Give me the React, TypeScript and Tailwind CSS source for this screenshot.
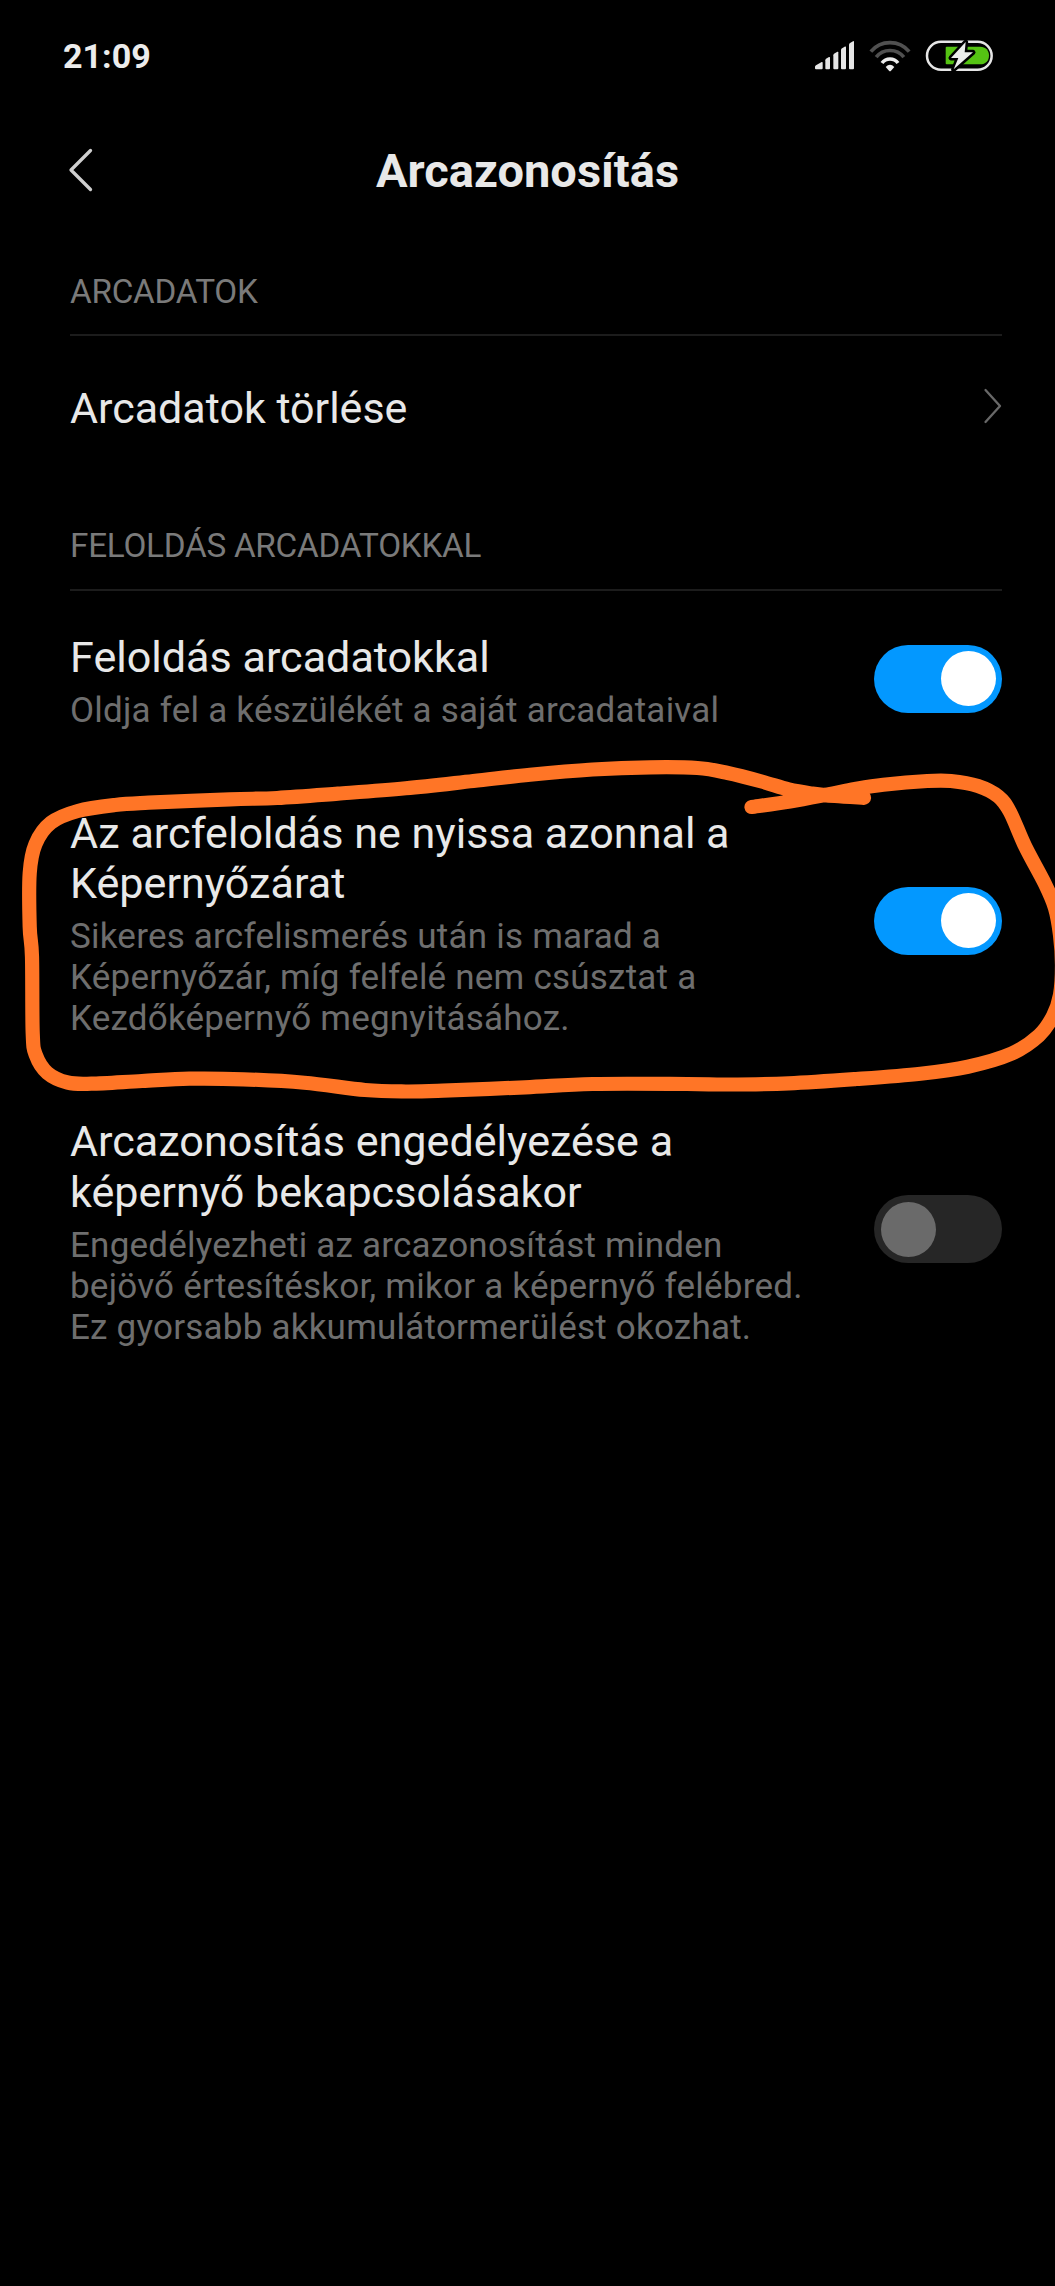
type Point = [number, number];

const STROKE_POINTS: Point[] = [
  [751.5, 807], [790, 801.5], [827.6, 794.5], [855, 789], [883.3, 784.7], [927.3, 781], [951, 781],
  [978, 786], [998.3, 796.5], [1010, 812], [1025.3, 846.7], [1045, 884], [1055, 908], [1060, 935],
  [1062, 965], [1060, 995], [1053, 1016], [1039, 1035.5], [1011.8, 1053.5], [967.9, 1066.7],
  [920.5, 1073.7], [856.3, 1079], [788.7, 1083.3], [727.8, 1084.5], [687, 1084], [592.6, 1084],
  [525, 1087.3], [442.9, 1090.7], [405.7, 1091.5], [365, 1090], [304.3, 1082.7], [243.4, 1079.3],
  [189.3, 1078.7], [142, 1081], [91.3, 1083.7], [67.6, 1082.5], [47.3, 1072.8], [35.8, 1055],
  [32.7, 1033], [32, 956.7], [29.7, 926.7], [29.7, 873.3], [35.5, 844], [51, 822.7], [77.8, 811],
  [115, 805], [148.7, 802.7], [229.9, 799.3], [277.2, 798], [338, 793.7], [405.7, 788.3],
  [473.3, 781], [530, 774.7], [592.6, 769.5], [650, 767.3], [697.4, 768], [727.8, 773],
  [761.6, 781.5], [788.7, 789.5], [812.4, 793.6], [835, 796], [864, 797.8],
];

/** Catmull-Rom spline through the points, written as cubic segments. */
function smoothPath(points: Point[]): string {
  let d = `M${points[0][0]} ${points[0][1]}`;
  for (let i = 0; i < points.length - 1; i++) {
    const p0 = points[Math.max(0, i - 1)];
    const p1 = points[i];
    const p2 = points[i + 1];
    const p3 = points[Math.min(points.length - 1, i + 2)];
    d += ` C${p1[0] + (p2[0] - p0[0]) / 6} ${p1[1] + (p2[1] - p0[1]) / 6} ${p2[0] - (p3[0] - p1[0]) / 6} ${p2[1] - (p3[1] - p1[1]) / 6} ${p2[0]} ${p2[1]}`;
  }
  return d;
}

function HandDrawnCircle() {
  return (
    <svg className="pointer-events-none absolute inset-0 h-full w-full" viewBox="0 0 1055 2286" fill="none">
      <path d={smoothPath(STROKE_POINTS)} stroke="#ff7526" strokeWidth="14.2" strokeLinecap="round" strokeLinejoin="round" />
    </svg>
  );
}

function SignalIcon() {
  return (
    <svg className="h-[34px] w-10" viewBox="75 57 120 102" fill="#e6e6e6">
      <path d="M75 140q0-3 3-4.500L95 126q3-1 3 2v17q0 3-3 3H78q-3 0-3-3z" />
      <path d="M106 121q0-3 2-4.500l9-5.500q3-1 3 2v32q0 3-3 3h-8q-3 0-3-3z" />
      <path d="M130 106q0-3 2-4.500l10-6q3-1 3 2v47.500q0 3-3 3h-9q-3 0-3-3z" />
      <path d="M153 90q0-3 2-4.500l10-6q3-1 3 2V145q0 3-3 3h-9q-3 0-3-3z" />
      <path d="M177 74q0-3 2-4.500l10-6q3-1 3 2V145q0 3-3 3h-9q-3 0-3-3z" />
    </svg>
  );
}

function WifiIcon() {
  return (
    <svg className="h-[34px] w-11" viewBox="234 57 132 102" fill="none" strokeWidth="11">
      <path d="M242.500 95A74.700 74.700 0 0 1 357.500 95" stroke="#505050" />
      <path d="M258.500 111.500A53 53 0 0 1 341.500 111.500" stroke="#505050" />
      <path d="M276 129A30 30 0 0 1 324 129" stroke="#ececec" />
      <path d="M287 141Q300 127 313 141L303 152Q300 155 297 152Z" fill="#ececec" />
    </svg>
  );
}

function BatteryIcon() {
  return (
    <svg className="h-[34px] w-[69px]" viewBox="405 57 207 102" fill="none">
      <rect x="411" y="65.500" width="194" height="84" rx="42" stroke="#e6e6e6" strokeWidth="7.500" />
      <path d="M470 80H570C588 80 597 92 597 106.500S588 133 570 133H470Q467 133 467 130V83Q467 80 470 80Z" fill="#55c313" />
      <path
        d="M527 67L483 114H505L491 148L549 97H524Z"
        fill="#000"
        stroke="#000"
        strokeWidth="15"
        strokeLinejoin="round"
      />
      <path d="M527 66L483 114H505L491 148L549 97H524Z" fill="#ececec" />
    </svg>
  );
}

function Lines({ lines }: { lines: string[] }) {
  return (
    <>
      {lines.map((line) => (
        <span key={line} className="block whitespace-nowrap">
          {line}
        </span>
      ))}
    </>
  );
}

function Toggle({ on }: { on: boolean }) {
  return (
    <button
      type="button"
      role="switch"
      aria-checked={on}
      className={`mb-[5px] flex h-[68px] w-32 shrink-0 items-center rounded-full ${
        on ? "justify-end bg-[#0398ff] pr-[6px]" : "justify-start bg-[#262626] pl-[7px]"
      }`}
    >
      <span className={`size-[55px] rounded-full ${on ? "bg-white" : "bg-[#6a6a6a]"}`} />
    </button>
  );
}

function SettingRow({ title, summary, on }: { title: string[]; summary: string[]; on: boolean }) {
  return (
    <div className="flex items-center justify-between">
      <div>
        <h3 className="pt-px text-[43.1px] leading-[50.7px] text-[#e8e8e8]">
          <Lines lines={title} />
        </h3>
        <p className="mt-[6px] text-[35px] leading-[41px] tracking-[0.22px] text-[#6e6e6e]">
          <Lines lines={summary} />
        </p>
      </div>
      <Toggle on={on} />
    </div>
  );
}

function SectionHeader({ children }: { children: string }) {
  return <h2 className="border-b-2 border-[#1c1c1c] text-[33.3px] leading-10 tracking-[-0.27px] text-[#7a7a7a]">{children}</h2>;
}

export default function App() {
  return (
    <div className="relative min-h-[2286px] w-[1055px] overflow-hidden bg-black font-[Roboto,sans-serif]">
      <div className="flex h-28 items-center justify-between pr-[61px] pl-[63px]">
        <span className="text-[34.1px] leading-10 font-bold text-[#ececec]">21:09</span>
        <div className="flex items-center gap-[13px]">
          <SignalIcon />
          <WifiIcon />
          <BatteryIcon />
        </div>
      </div>

      <header className="grid h-[118px] grid-cols-[1fr_auto_1fr] items-center px-[66px]">
        <button type="button" aria-label="Vissza" className="mb-[3px] justify-self-start">
          <svg className="block h-12 w-[30px]" viewBox="0 0 30 48" fill="none">
            <path d="M24.500 4.500L5 24L24.500 43.500" stroke="#cfcfcf" strokeWidth="3.300" strokeLinecap="round" strokeLinejoin="round" />
          </svg>
        </button>
        <h1 className="text-[47px] leading-[56px] font-bold text-[#e8e8e8]">Arcazonosítás</h1>
      </header>

      <main className="pr-[53px] pl-[70px]">
        <section className="pt-[42px] [&>h2]:pb-[22px]">
          <SectionHeader>ARCADATOK</SectionHeader>
          <div className="flex items-center justify-between pt-[47px]">
            <h3 className="text-[43px] leading-[51px] text-[#e8e8e8]">Arcadatok törlése</h3>
            <svg className="mb-[5px] h-10 w-5" viewBox="0 0 20 40" fill="none">
              <path d="M3.500 4L18 20L3.500 36" stroke="#686868" strokeWidth="2.300" strokeLinecap="round" strokeLinejoin="round" />
            </svg>
          </div>
        </section>

        <section className="pt-[92px] [&>h2]:pb-[23px]">
          <SectionHeader>FELOLDÁS ARCADATOKKAL</SectionHeader>
          <div className="flex flex-col gap-[77px] pt-[41px]">
            <SettingRow
              title={["Feloldás arcadatokkal"]}
              summary={["Oldja fel a készülékét a saját arcadataival"]}
              on
            />
            <SettingRow
              title={["Az arcfeloldás ne nyissa azonnal a", "Képernyőzárat"]}
              summary={[
                "Sikeres arcfelismerés után is marad a",
                "Képernyőzár, míg felfelé nem csúsztat a",
                "Kezdőképernyő megnyitásához.",
              ]}
              on
            />
            <SettingRow
              title={["Arcazonosítás engedélyezése a", "képernyő bekapcsolásakor"]}
              summary={[
                "Engedélyezheti az arcazonosítást minden",
                "bejövő értesítéskor, mikor a képernyő felébred.",
                "Ez gyorsabb akkumulátormerülést okozhat.",
              ]}
              on={false}
            />
          </div>
        </section>
      </main>

      <HandDrawnCircle />
    </div>
  );
}
